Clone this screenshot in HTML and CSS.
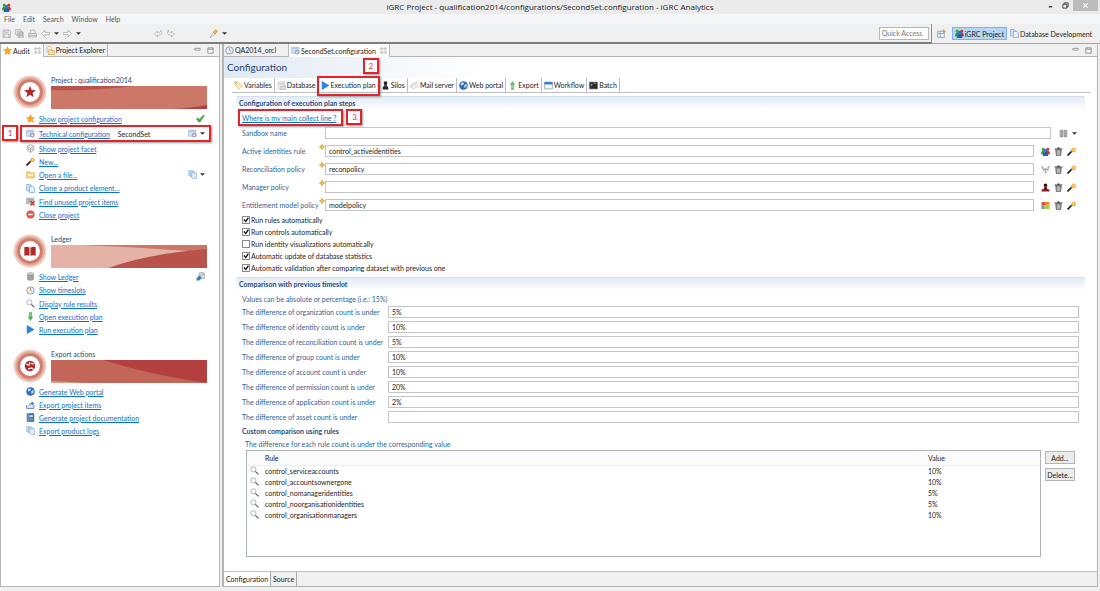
FILE: index.html
```html
<!DOCTYPE html>
<html lang="en">
<head>
<meta charset="utf-8">
<title>iGRC Project - iGRC Analytics</title>
<link rel="stylesheet" href="styles.css">
</head>
<body>
<svg class="sprite" width="0" height="0" aria-hidden="true">
  <symbol id="people" viewBox="0 0 16 16"><circle cx="4" cy="4" r="2.6" fill="#35a435"/><circle cx="12" cy="4" r="2.6" fill="#d83030"/><path d="M0 13c0-5 2-7 4-7s4 2 4 7z" fill="#239a32"/><path d="M8 13c0-5 2-7 4-7s4 2 4 7z" fill="#c92b2b"/><circle cx="8" cy="6" r="2.8" fill="#2e72c8"/><path d="M3 16c0-5 2-7 5-7s5 2 5 7z" fill="#1e5fc0"/></symbol>
  <symbol id="save" viewBox="0 0 16 16"><path d="M2 2h11l2 2v11H2zM5 2v4h6V2M4 15V9h8v6" fill="#f0f0f0" stroke="#a9a9a9" stroke-width="1.4"/></symbol>
  <symbol id="saveall" viewBox="0 0 16 16"><path d="M1 1h9v9H1zM4 4h9v8H4zM6 6h9v9H6zM8 6v3h5V6M8 15v-4h5v4" fill="#f0f0f0" stroke="#a9a9a9" stroke-width="1.2"/></symbol>
  <symbol id="print" viewBox="0 0 16 16"><path d="M4 8l1-6h7l1 6M1 8h14v6H1zM3 14v-3h10v3" fill="#eee" stroke="#a3a3a3" stroke-width="1.3"/></symbol>
  <symbol id="back" viewBox="0 0 16 16"><path d="M1 8l6-6v4h8v4H7v4z" fill="#f8f8f8" stroke="#a5a5a5" stroke-width="1.3"/></symbol>
  <symbol id="fwd" viewBox="0 0 16 16"><path d="M15 8L9 2v4H1v4h8v4z" fill="#f8f8f8" stroke="#a5a5a5" stroke-width="1.3"/></symbol>
  <symbol id="prev" viewBox="0 0 16 16"><path d="M1 9l5-5v3c4 0 6-2 6-5 3 5 2 9-6 9v3z" fill="#f8f8f8" stroke="#a5a5a5" stroke-width="1.2"/></symbol>
  <symbol id="next" viewBox="0 0 16 16"><path d="M15 9l-5-5v3C6 7 4 5 4 2c-3 5-2 9 6 9v3z" fill="#f8f8f8" stroke="#a5a5a5" stroke-width="1.2"/></symbol>
  <symbol id="torch" viewBox="0 0 16 16"><path d="M2 15l6-9 3 2-7 7z" fill="#fff" stroke="#8a8a9a"/><path d="M7 6l5-5 3 3-4 5z" fill="#f3b54a" stroke="#c88a2a"/></symbol>
  <symbol id="star" viewBox="0 0 16 16"><path d="M8 1l2.2 4.7 5.3.6-4 3.5 1.2 5.2L8 12.4 3.3 15l1.2-5.2-4-3.5 5.3-.6z" fill="#f7a823" stroke="#e08a10" stroke-width=".7"/></symbol>
  <symbol id="x" viewBox="0 0 16 16"><path d="M2 2h3l3 3 3-3h3v3l-3 3 3 3v3h-3l-3-3-3 3H2v-3l3-3-3-3z" fill="#fff" stroke="#777" stroke-width="1.4"/></symbol>
  <symbol id="folders" viewBox="0 0 16 16"><path d="M2 1h6l2 3v6H2z" fill="#fff" stroke="#c9963a"/><path d="M4 6h4l1 2h6v7H4z" fill="#f9dda0" stroke="#c9963a"/></symbol>
  <symbol id="min" viewBox="0 0 16 16"><path d="M2 3h12v4H2z" fill="#fff" stroke="#777" stroke-width="1.6"/></symbol>
  <symbol id="max" viewBox="0 0 16 16"><path d="M2 2h12v12H2zM2 5h12" fill="#fff" stroke="#777" stroke-width="1.8"/></symbol>
  <symbol id="config" viewBox="0 0 16 16"><path d="M1 2h13v11H1z" fill="#cfe2f6" stroke="#93b2d4"/><path d="M2 4h11" stroke="#a6c3e4" stroke-width="2"/><circle cx="11" cy="11" r="3.2" fill="#c3c9d2" stroke="#9aa3b0" stroke-width="2"/><circle cx="11" cy="11" r="1.2" fill="#fff"/></symbol>
  <symbol id="cube" viewBox="0 0 16 16"><path d="M8 1l6 3v7l-6 4-6-4V4zM2 4l6 3 6-3M8 7v8" fill="#e5e7e8" stroke="#8f9598"/><circle cx="5" cy="9" r="1.2" fill="#999"/><circle cx="11" cy="9" r="1.2" fill="#999"/></symbol>
  <symbol id="wand" viewBox="0 0 16 16"><path d="M1 15l8-8" stroke="#222" stroke-width="3"/><path d="M9 2l2 1 2-2 1 3 2 1-2 2v2l-3-1-3 1V6z" fill="#f6b73c" stroke="#d58b1d" stroke-width=".7"/><circle cx="11.5" cy="5" r="1.4" fill="#fff3c8"/></symbol>
  <symbol id="folder" viewBox="0 0 16 16"><path d="M1 3h5l1 2h8v9H1z" fill="#fbd27a" stroke="#e3a33b"/><path d="M3 7h10v4H3z" fill="#fff0c4"/></symbol>
  <symbol id="pages" viewBox="0 0 16 16"><path d="M1 1h7l2 2v9H1z" fill="#d6e7f8" stroke="#5a92cc"/><path d="M6 4h6l3 3v8H6z" fill="#eaf4ff" stroke="#4b86c4"/></symbol>
  <symbol id="copies" viewBox="0 0 16 16"><path d="M1 1h8v9H1zM4 3h8v9H4z" fill="#cfe2f5" stroke="#8eb4dc"/><path d="M6 5h9v10H8l-2-2z" fill="#deecfb" stroke="#7ba6d3"/></symbol>
  <symbol id="unused" viewBox="0 0 16 16"><path d="M1 2h13v10H1z" fill="#c8ccd0" stroke="#8d9297"/><path d="M3 5h9M3 8h6" stroke="#777"/><path d="M8 7l7 8m0-8l-7 8" stroke="#df2a1c" stroke-width="2.4"/></symbol>
  <symbol id="stop" viewBox="0 0 16 16"><circle cx="8" cy="8" r="6.8" fill="#e4554c" stroke="#d0463e"/><path d="M4 8h8" stroke="#fff" stroke-width="2.6"/></symbol>
  <symbol id="check" viewBox="0 0 16 16"><path d="M1 9l3-2 2 3 7-8 2 1-8 11H5z" fill="#3fb43f" stroke="#26882c"/></symbol>
  <symbol id="db" viewBox="0 0 16 16"><path d="M2 3c0-3 12-3 12 0v10c0 3-12 3-12 0z" fill="#8e9194"/><ellipse cx="8" cy="3.5" rx="6" ry="2" fill="#c4c6c8"/><path d="M2 7c2 2 10 2 12 0M2 11c2 2 10 2 12 0" stroke="#d3d5d6" fill="none"/></symbol>
  <symbol id="dblight" viewBox="0 0 16 16"><path d="M2 3c0-3 12-3 12 0v10c0 3-12 3-12 0z" fill="#ededed" stroke="#b9b9b9"/><path d="M2 4c2 2 10 2 12 0M7 9h8v6H7z" stroke="#aaa" fill="#e0e0e0"/></symbol>
  <symbol id="dbup" viewBox="0 0 16 16"><path d="M5 2c0-2 10-2 10 0v10H5z" fill="#d6dade" stroke="#8e979f"/><path d="M1 15v-4l5-5 4 4-4 5z" fill="#3f78b8"/><path d="M8 6l6-3" stroke="#7b8790"/></symbol>
  <symbol id="clock" viewBox="0 0 16 16"><circle cx="8" cy="8" r="6.3" fill="#eaf3ff" stroke="#9aa6b8" stroke-width="2"/><path d="M8 4v4l3 1" fill="none" stroke="#c98a35" stroke-width="1.6"/></symbol>
  <symbol id="search" viewBox="0 0 16 16"><circle cx="6" cy="6" r="4.6" fill="#f7fbfd" stroke="#929da4" stroke-width="1.2"/><path d="M9.5 9.5L15 15" stroke="#555" stroke-width="1.9"/></symbol>
  <symbol id="plan" viewBox="0 0 16 16"><path d="M6 1h4v8h2l-4 6-4-6h2z" fill="#53b558" stroke="#3a9142" stroke-width=".8"/><path d="M6 3h4M6 6h4" stroke="#b7e2b8"/></symbol>
  <symbol id="play" viewBox="0 0 16 16"><path d="M2 1l12 7-12 7z" fill="#2b86e2" stroke="#1b6fc8"/></symbol>
  <symbol id="globe" viewBox="0 0 16 16"><circle cx="8" cy="8" r="7" fill="#2e6fc0" stroke="#2a5b9d"/><path d="M3 4l4-2 2 2-2 3-3 1zM9 8l4-3 1 4-4 4z" fill="#c4def3"/></symbol>
  <symbol id="export" viewBox="0 0 16 16"><path d="M1 9v6h13V9" fill="#dbe8f6" stroke="#557eaf" stroke-width="1.5"/><path d="M4 11c1-5 4-6 6-6V2l5 4-5 4V7c-3 0-4 2-6 4z" fill="#4d7ec0"/></symbol>
  <symbol id="book" viewBox="0 0 16 16"><path d="M2 1h12v14H2z" fill="#3c73b0" stroke="#2c5a8f"/><path d="M4 1v14" stroke="#a8c6e4"/><path d="M6 4h6v3H6z" fill="#d9e8f6"/><path d="M6 10h6M6 12h6" stroke="#9fc0df"/></symbol>
  <symbol id="tag" viewBox="0 0 16 16"><path d="M1 1h5l9 8-6 6-8-9z" fill="#f8e6bd" stroke="#d4b271"/><circle cx="4" cy="4" r="1.2" fill="#fff" stroke="#b99c5f"/></symbol>
  <symbol id="silo" viewBox="0 0 16 16"><path d="M5 1h6v4l-1 2 3 5v3H3v-3l3-5-1-2z" fill="#262626"/><path d="M6 9h4" stroke="#aaa"/></symbol>
  <symbol id="mail" viewBox="0 0 16 16"><path d="M2 6l9-4 4 7-9 5-5-3z" fill="#f4f4f4" stroke="#b9bcc0"/><path d="M2 6l7 2 2-6M1 11l5-3" fill="none" stroke="#c5c8cc"/></symbol>
  <symbol id="up" viewBox="0 0 16 16"><path d="M8 1l4 5h-2v9H6V6H4z" fill="#6fc072" stroke="#4ba552" stroke-width=".9"/><path d="M6 9h4M6 12h4" stroke="#cbeccb"/></symbol>
  <symbol id="window" viewBox="0 0 16 16"><path d="M1 2h14v12H1z" fill="#f5f8fb" stroke="#6f7d8b"/><path d="M1 2h14v4H1z" fill="#2f78c8"/></symbol>
  <symbol id="batch" viewBox="0 0 16 16"><path d="M1 2h14v12H1z" fill="#2b2b2b" stroke="#555"/><path d="M3 5l3 2-3 2M8 4h5" fill="none" stroke="#ddd"/></symbol>
  <symbol id="persp" viewBox="0 0 16 16"><path d="M1 4h12v11H1zM1 8h12M6 4v11" fill="#eaf2fb" stroke="#8596ab" stroke-width="1.3"/><path d="M12 1v7M9 4h7" stroke="#e0a030" stroke-width="2"/></symbol>
  <symbol id="columns" viewBox="0 0 16 16"><path d="M2 2h5v12H2zM9 2h5v12H9z" fill="#a5a5a5" stroke="#8a8a8a"/></symbol>
  <symbol id="trash" viewBox="0 0 16 16"><path d="M3 5h10l-1 10H4z" fill="#8c8c8c" stroke="#444"/><path d="M1 3.5h14M6 2h4" stroke="#444" stroke-width="2"/><path d="M6 6v8M8 6v8M10 6v8" stroke="#ddd"/></symbol>
  <symbol id="recon" viewBox="0 0 16 16"><path d="M2 3l4 4h4l4-4M8 7v6M3 12l4-5M13 12L9 7M2 3l1 5h10l1-5" fill="none" stroke="#999" stroke-width="1.4"/><circle cx="2" cy="3" r="1.8" fill="#bbb"/><circle cx="14" cy="3" r="1.8" fill="#bbb"/><circle cx="8" cy="13" r="2" fill="#aaa"/></symbol>
  <symbol id="manager" viewBox="0 0 16 16"><circle cx="8" cy="4" r="3" fill="#2b1111"/><path d="M6 6h4l1 4 4 2v3H1v-3l4-2z" fill="#8b1f1f"/><path d="M7 7h2v5H7z" fill="#1c1c1c"/></symbol>
  <symbol id="model" viewBox="0 0 16 16"><path d="M1 2h14v12H1z" fill="#ffd23a"/><path d="M1 2h7v6H1z" fill="#e44a38"/><path d="M8 2h7v4H8z" fill="#f47b30"/><path d="M1 9h5v5H1z" fill="#4f9ce0"/><path d="M8 8h7v6H8z" fill="#8bd53a"/></symbol>
  <symbol id="hint" viewBox="0 0 16 16"><path d="M8 2l2 4 4 2-4 2-2 4-2-4-4-2 4-2z" fill="#fff" stroke="#e0a52a" stroke-width="3"/></symbol>
  <symbol id="caret" viewBox="0 0 8 8"><path d="M0 2h8L4 6z" fill="#333"/></symbol>
  <symbol id="ring" viewBox="0 0 36 36"><circle cx="18" cy="18" r="17.5" fill="#f0cfc4"/><circle cx="18" cy="18" r="15.5" fill="#e3a898"/><circle cx="18" cy="18" r="13.5" fill="#cf7c6c"/><circle cx="18" cy="18" r="10.5" fill="#fff"/></symbol>
</svg>

<header class="titlebar">
  <svg class="icon"><use href="#people"/></svg>
  <h1>iGRC Project - qualification2014/configurations/SecondSet.configuration - iGRC Analytics</h1>
  <div class="winbuttons">
    <button type="button" aria-label="Minimize"><svg viewBox="0 0 16 16"><path d="M4 11h8" stroke="#333" stroke-width="3"/></svg></button>
    <button type="button" aria-label="Restore"><svg viewBox="0 0 16 16"><path d="M5 5V2h9v9h-3M2 5h9v9H2z" fill="none" stroke="#333" stroke-width="2"/></svg></button>
    <button type="button" class="close" aria-label="Close"><svg viewBox="0 0 16 16"><path d="M3 3l10 10M13 3L3 13" stroke="#fff" stroke-width="2.5"/></svg></button>
  </div>
</header>
<nav class="menubar">
  <button type="button">File</button><button type="button">Edit</button><button type="button">Search</button><button type="button">Window</button><button type="button">Help</button>
</nav>
<div class="toolbar">
  <div class="tools">
    <button type="button" aria-label="Save"><svg class="icon"><use href="#save"/></svg></button>
    <button type="button" aria-label="Save all"><svg class="icon"><use href="#saveall"/></svg></button>
    <button type="button" aria-label="Print"><svg class="icon"><use href="#print"/></svg></button>
    <button type="button" aria-label="Back"><svg class="icon"><use href="#back"/></svg><svg class="caret"><use href="#caret"/></svg></button>
    <button type="button" aria-label="Forward"><svg class="icon"><use href="#fwd"/></svg><svg class="caret"><use href="#caret"/></svg></button>
    <div class="edits">
      <button type="button" aria-label="Previous edit"><svg class="icon"><use href="#prev"/></svg></button>
      <button type="button" aria-label="Next edit"><svg class="icon"><use href="#next"/></svg></button>
    </div>
    <button type="button" aria-label="Search"><svg class="icon"><use href="#torch"/></svg><svg class="caret"><use href="#caret"/></svg></button>
    <input class="quick" type="text" placeholder="Quick Access" aria-label="Quick Access">
  </div>
  <div class="perspectives">
    <button type="button" aria-label="Open perspective"><svg class="icon"><use href="#persp"/></svg></button>
    <button type="button" class="persp on"><svg class="icon"><use href="#people"/></svg>iGRC Project</button>
    <button type="button" class="persp"><svg class="icon"><use href="#pages"/></svg>Database Development</button>
  </div>
</div>

<div class="workbench">
  <aside class="pane audit">
    <div class="tabs">
      <button type="button" class="tab on"><svg class="icon"><use href="#star"/></svg>Audit<svg class="mini"><use href="#x"/></svg></button>
      <button type="button" class="tab"><svg class="icon"><use href="#folders"/></svg>Project Explorer</button>
      <span class="panebuttons"><svg class="mini"><use href="#min"/></svg><svg class="mini"><use href="#max"/></svg></span>
    </div>
    <div class="groups">
      <section class="group">
        <header class="grouphead">
          <svg class="ring" viewBox="0 0 36 36"><use href="#ring"/><path d="M18 11.5l1.700 4.300 4.600.3-3.600 2.900 1.200 4.500-3.900-2.500-3.900 2.500 1.200-4.500-3.600-2.900 4.600-.3z" fill="#b02a2a"/></svg>
          <div class="grouptitle"><h2>Project : qualification2014</h2>
            <svg class="banner" viewBox="0 0 155 23" preserveAspectRatio="none"><path d="M0 0h155v23H0z" fill="#cb7868"/><path d="M0 0h82Q45 5 0 4z" fill="#b9524a"/><path d="M120 23q20-1 35-4v4z" fill="#b33f3f"/></svg></div>
        </header>
        <ul class="actions">
          <li><svg class="icon"><use href="#star"/></svg><a href="#">Show project configuration</a><svg class="icon lone"><use href="#check"/></svg></li>
          <li class="tall"><svg class="icon"><use href="#config"/></svg><a href="#">Technical configuration</a><span class="current">SecondSet</span><button type="button" class="more" aria-label="Choose configuration"><svg class="icon"><use href="#config"/></svg><svg class="caret"><use href="#caret"/></svg></button>
            <span class="mark rowmark"></span><span class="mark badge one">1</span></li>
          <li><svg class="icon"><use href="#cube"/></svg><a href="#">Show project facet</a></li>
          <li><svg class="icon"><use href="#wand"/></svg><a href="#">New...</a></li>
          <li><svg class="icon"><use href="#folder"/></svg><a href="#">Open a file...</a><button type="button" class="more" aria-label="Recent files"><svg class="icon"><use href="#copies"/></svg><svg class="caret"><use href="#caret"/></svg></button></li>
          <li class="mid"><svg class="icon"><use href="#pages"/></svg><a href="#">Clone a product element...</a></li>
          <li><svg class="icon"><use href="#unused"/></svg><a href="#">Find unused project items</a></li>
          <li><svg class="icon"><use href="#stop"/></svg><a href="#">Close project</a></li>
        </ul>
      </section>
      <section class="group compact">
        <header class="grouphead">
          <svg class="ring" viewBox="0 0 36 36"><use href="#ring"/><path d="M12 14q3-1 5.500.5V23q-2.500-1-5.500 0zM24 14q-3-1-5.500.5V23q2.500-1 5.500 0z" fill="#b02a2a"/></svg>
          <div class="grouptitle"><h2>Ledger</h2>
            <svg class="banner" viewBox="0 0 155 23" preserveAspectRatio="none"><path d="M0 0h155v23H0z" fill="#e5b3a5"/><path d="M30 0h125v5l-17 1Q80 2 30 0z" fill="#cb7868"/><path d="M57 23Q95 9 155 4v19z" fill="#b9524a"/></svg></div>
        </header>
        <ul class="actions">
          <li><svg class="icon"><use href="#db"/></svg><a href="#">Show Ledger</a><svg class="icon lone"><use href="#dbup"/></svg></li>
          <li class="mid"><svg class="icon"><use href="#clock"/></svg><a href="#">Show timeslots</a></li>
          <li><svg class="icon"><use href="#search"/></svg><a href="#">Display rule results</a></li>
          <li><svg class="icon"><use href="#plan"/></svg><a href="#">Open execution plan</a></li>
          <li><svg class="icon"><use href="#play"/></svg><a href="#">Run execution plan</a></li>
        </ul>
      </section>
      <section class="group compact">
        <header class="grouphead">
          <svg class="ring" viewBox="0 0 36 36"><use href="#ring"/><circle cx="18" cy="18" r="5.5" fill="#b02a2a"/><path d="M14 16l3 1 1-3m-2 7l4-1 2 2m-3-7l3 1" fill="none" stroke="#fff" stroke-width="1.2"/></svg>
          <div class="grouptitle"><h2>Export actions</h2>
            <svg class="banner" viewBox="0 0 155 23" preserveAspectRatio="none"><path d="M0 0h155v23H0z" fill="#c3665a"/><path d="M52 0h103v23Q95 14 52 0z" fill="#b33f3f"/><path d="M0 21l35 2H0z" fill="#dd9d8d"/></svg></div>
        </header>
        <ul class="actions">
          <li><svg class="icon"><use href="#globe"/></svg><a href="#">Generate Web portal</a></li>
          <li><svg class="icon"><use href="#export"/></svg><a href="#">Export project items</a></li>
          <li><svg class="icon"><use href="#book"/></svg><a href="#">Generate project documentation</a></li>
          <li><svg class="icon"><use href="#copies"/></svg><a href="#">Export product logs</a></li>
        </ul>
      </section>
    </div>
  </aside>

  <main class="pane editor">
    <div class="tabs">
      <button type="button" class="tab file"><svg class="icon"><use href="#clock"/></svg>QA2014_orcl</button>
      <button type="button" class="tab on"><svg class="icon"><use href="#config"/></svg>SecondSet.configuration<svg class="mini"><use href="#x"/></svg></button>
      <span class="panebuttons"><svg class="mini"><use href="#min"/></svg><svg class="mini"><use href="#max"/></svg></span>
    </div>
    <div class="page">
      <div class="pagehead"><h2>Configuration</h2></div>
      <nav class="pagetabs">
        <button type="button"><svg class="icon"><use href="#tag"/></svg>Variables</button>
        <button type="button"><svg class="icon"><use href="#dblight"/></svg>Database</button>
        <button type="button" class="on"><svg class="icon"><use href="#play"/></svg>Execution plan<span class="mark tabmark"></span><span class="mark badge two">2</span></button>
        <button type="button"><svg class="icon"><use href="#silo"/></svg>Silos</button>
        <button type="button"><svg class="icon"><use href="#mail"/></svg>Mail server</button>
        <button type="button"><svg class="icon"><use href="#globe"/></svg>Web portal</button>
        <button type="button"><svg class="icon"><use href="#up"/></svg>Export</button>
        <button type="button"><svg class="icon"><use href="#window"/></svg>Workflow</button>
        <button type="button"><svg class="icon"><use href="#batch"/></svg>Batch</button>
      </nav>
      <section class="block">
        <h3>Configuration of execution plan steps</h3>
        <div class="body">
          <p class="help"><a href="#">Where is my main collect line ?</a><span class="mark linkmark"></span><span class="mark badge three">3</span></p>
          <div class="field wide"><label for="f0">Sandbox name</label><input id="f0" type="text"><span class="fieldtools"><svg class="icon"><use href="#columns"/></svg><svg class="caret"><use href="#caret"/></svg></span></div>
          <div class="field"><label for="f1">Active identities rule</label><svg class="hint"><use href="#hint"/></svg><input id="f1" type="text" value="control_activeidentities"><span class="fieldtools"><svg class="icon"><use href="#people"/></svg><svg class="icon"><use href="#trash"/></svg><svg class="icon"><use href="#wand"/></svg></span></div>
          <div class="field"><label for="f2">Reconciliation policy</label><svg class="hint"><use href="#hint"/></svg><input id="f2" type="text" value="reconpolicy"><span class="fieldtools"><svg class="icon"><use href="#recon"/></svg><svg class="icon"><use href="#trash"/></svg><svg class="icon"><use href="#wand"/></svg></span></div>
          <div class="field"><label for="f3">Manager policy</label><svg class="hint"><use href="#hint"/></svg><input id="f3" type="text"><span class="fieldtools"><svg class="icon"><use href="#manager"/></svg><svg class="icon"><use href="#trash"/></svg><svg class="icon"><use href="#wand"/></svg></span></div>
          <div class="field"><label for="f4">Entitlement model policy</label><svg class="hint"><use href="#hint"/></svg><input id="f4" type="text" value="modelpolicy"><span class="fieldtools"><svg class="icon"><use href="#model"/></svg><svg class="icon"><use href="#trash"/></svg><svg class="icon"><use href="#wand"/></svg></span></div>
          <label class="tick"><input type="checkbox" checked>Run rules automatically</label>
          <label class="tick"><input type="checkbox" checked>Run controls automatically</label>
          <label class="tick"><input type="checkbox">Run identity visualizations automatically</label>
          <label class="tick"><input type="checkbox" checked>Automatic update of database statistics</label>
          <label class="tick"><input type="checkbox" checked>Automatic validation after comparing dataset with previous one</label>
        </div>
      </section>
      <section class="block">
        <h3>Comparison with previous timeslot</h3>
        <div class="body">
          <p class="note">Values can be absolute or percentage (i.e.: 15%)</p>
          <div class="limit"><label for="d1">The difference of organization count is under</label><input id="d1" type="text" value="5%"></div>
          <div class="limit"><label for="d2">The difference of identity count is under</label><input id="d2" type="text" value="10%"></div>
          <div class="limit"><label for="d3">The difference of reconciliation count is under</label><input id="d3" type="text" value="5%"></div>
          <div class="limit"><label for="d4">The difference of group count is under</label><input id="d4" type="text" value="10%"></div>
          <div class="limit"><label for="d5">The difference of account count is under</label><input id="d5" type="text" value="10%"></div>
          <div class="limit"><label for="d6">The difference of permission count is under</label><input id="d6" type="text" value="20%"></div>
          <div class="limit"><label for="d7">The difference of application count is under</label><input id="d7" type="text" value="2%"></div>
          <div class="limit"><label for="d8">The difference of asset count is under</label><input id="d8" type="text"></div>
          <h4>Custom comparison using rules</h4>
          <p class="note sub">The difference for each rule count is under the corresponding value</p>
          <div class="rules">
            <div class="tablebox">
              <table>
                <thead><tr><th class="c-icon"></th><th>Rule</th><th class="c-value">Value</th></tr></thead>
                <tbody>
                  <tr><td><svg class="icon"><use href="#search"/></svg></td><td>control_serviceaccounts</td><td>10%</td></tr>
                  <tr><td><svg class="icon"><use href="#search"/></svg></td><td>control_accountsownergone</td><td>10%</td></tr>
                  <tr><td><svg class="icon"><use href="#search"/></svg></td><td>control_nomanageridentities</td><td>5%</td></tr>
                  <tr><td><svg class="icon"><use href="#search"/></svg></td><td>control_noorganisationidentities</td><td>5%</td></tr>
                  <tr><td><svg class="icon"><use href="#search"/></svg></td><td>control_organisationmanagers</td><td>10%</td></tr>
                </tbody>
              </table>
            </div>
            <div class="rulebuttons"><button type="button">Add...</button><button type="button">Delete...</button></div>
          </div>
        </div>
      </section>
    </div>
    <div class="bottomtabs"><button type="button" class="on">Configuration</button><button type="button">Source</button></div>
  </main>
</div>
</body>
</html>
```

FILE: styles.css
```css
* { box-sizing: border-box; margin: 0; padding: 0; }
body {
  display: flex; flex-direction: column; min-height: 100vh;
  background: #f0f0f0; color: #222;
  font: 7px/10px Lato, "Open Sans", sans-serif;
}
button, input { font: inherit; color: inherit; }
button { display: flex; align-items: center; gap: 2px; border: 0; background: none; white-space: nowrap; }
ul { list-style: none; }
.sprite { display: none; }
.icon { width: 9px; height: 9px; flex: none; display: block; }
.mini { width: 7px; height: 7px; flex: none; display: block; }
.caret { width: 5px; height: 5px; flex: none; display: block; }

.titlebar { display: flex; align-items: center; height: 14px; padding-left: 2px; background: #ebebeb; }
.titlebar h1 { flex: 1; padding-left: 46px; text-align: center; font: 400 8px/12px "Open Sans", sans-serif; }
.winbuttons { display: flex; align-self: flex-start; padding-right: 2px; }
.winbuttons button { width: 15px; height: 11px; justify-content: center; }
.winbuttons svg { width: 7px; height: 7px; }
.winbuttons .close { width: 25px; background: #bcbcbc; }

.menubar { display: flex; gap: 8px; height: 10px; padding-left: 4px; background: #f5f6f7; color: #555; }

.toolbar { display: flex; height: 20px; }
.tools { flex: 1; display: flex; align-items: center; gap: 4px; padding: 0 2px; border-bottom: 2px solid #7d7d7d; border-right: 1px solid #8a8a8a; }
.tools button { gap: 4px; }
.edits { display: flex; gap: 3px; padding: 0 30px 0 69px; }
.quick { width: 50px; height: 13px; margin-left: auto; padding: 0 2px; border: 1px solid #b4b8bd; background: #fff; }
.quick::placeholder { color: #777; opacity: 1; }
.perspectives { display: flex; align-items: center; gap: 2px; padding: 0 7px 0 5px; border-bottom: 1px solid #a5a5a5; }
.persp { height: 13px; padding: 0 1px; gap: 1px; }
.persp.on { margin-left: 4px; padding: 0 2px; background: #b5d7f5; border: 1px solid #80b4e6; }

.workbench { flex: 1; display: flex; gap: 2px; padding: 0 2px 4px 0; }
.pane { display: flex; flex-direction: column; border: 1px solid #b4b4b4; border-top: 0; background: #fff; }
.audit { width: 220px; flex: none; }
.editor { flex: 1; min-width: 0; border-left-width: 2px; }
.tabs { display: flex; height: 13px; background: #f0f0f0; border-bottom: 1px solid #b4b4b4; }
.tab { padding: 0 2px; gap: 1px; border-right: 1px solid #b9b9b9; }
.tab.on { height: 13px; background: #fff; }
.tab .mini { margin-left: 3px; }
.tab.file { padding: 0 12px 0 1px; }
.panebuttons { display: flex; gap: 6px; align-items: center; margin-left: auto; padding-right: 5px; }

.groups { display: flex; flex-direction: column; gap: 13px; padding-top: 18px; }
.grouphead { display: flex; gap: 4px; padding: 0 12px; margin-bottom: 3px; }
.compact .grouphead { margin-bottom: 2px; }
.ring { width: 34px; height: 34px; flex: none; }
.grouptitle { flex: 1; }
.grouptitle h2 { font-size: 7px; font-weight: 400; line-height: 11px; color: #254a7c; }
.banner { display: block; width: 100%; height: 23px; }
.actions li { position: relative; display: flex; align-items: center; height: 13px; padding: 0 14px 0 25px; gap: 4px; }
.actions li.mid { height: 14px; }
.actions li.tall { height: 17px; }
a { color: #0b6fd0; text-decoration: underline; }
.current { padding-left: 4px; }
.more { margin-left: auto; gap: 3px; }
.lone { margin-left: auto; }

.mark { position: absolute; border: 2px solid #e3232a; box-shadow: 1px 1px 2px #999; }
.badge { width: 16px; height: 16px; color: #d8383c; text-align: center; line-height: 12px; font-size: 8px; background: #fff; }
.rowmark { left: 19px; right: 8px; top: 0; bottom: 0; }
.badge.one { left: 1px; top: 0; }
.tabmark { left: -2px; right: -2px; top: -2px; bottom: -4px; }
.badge.two { right: -1px; top: -20px; }
.linkmark { left: -4px; right: -7px; top: -4px; bottom: -3px; }
.badge.three { right: -26px; top: -4px; }

.page { flex: 1; }
.pagehead { height: 21px; padding: 4px 4px 0 3px; background: linear-gradient(to right, #e1e9f5, #fff 260px); }
.pagehead h2 { font-size: 10px; line-height: 13px; font-weight: 400; color: #1d3f73; }
.pagetabs { display: flex; height: 15px; margin: 0 7px 0 8px; border-bottom: 1px solid #bdbdbd; }
.pagetabs button { position: relative; padding: 0 2px; gap: 1px; border-right: 1px solid #bdbdbd; }
.block { margin: 3px 12px 0; }
.block h3 { height: 14px; padding: 0 3px; border-top: 1px solid #d3dfee; border-radius: 2px; background: linear-gradient(#e3ebf5, #fff); font-size: 7px; line-height: 12px; color: #1f4b80; }
.body { padding: 0 6px; color: #2f5f95; }
.help { position: relative; width: max-content; margin: 3px 0 1px; }
.field { position: relative; display: flex; align-items: center; height: 18px; }
.field label { width: 83px; flex: none; white-space: nowrap; }
.body input[type="text"] { flex: 1; min-width: 0; height: 12px; padding: 0 3px; border: 1px solid #c3c5cb; background: #fff; color: #222; }
.fieldtools { display: flex; align-items: center; justify-content: flex-end; gap: 4px; width: 45px; padding-right: 3px; }
.wide .fieldtools { width: 28px; padding-right: 2px; }
.hint { position: absolute; left: 77px; top: 2px; width: 6px; height: 6px; }
.tick { display: flex; align-items: center; gap: 1px; height: 12px; color: #222; }
.tick input { appearance: none; width: 8px; height: 8px; border: 1px solid #8a8a8a; background: #fff; }
.tick input:checked::before { content: ""; display: block; width: 6px; height: 6px; background: #111; clip-path: polygon(5% 45%, 25% 35%, 42% 58%, 82% 5%, 98% 20%, 46% 92%); }
.note { padding-top: 3px; }
.limit { display: flex; align-items: center; height: 15px; }
.limit label { width: 146px; flex: none; white-space: nowrap; }
.body h4 { font-size: 7px; line-height: 10px; padding-top: 2px; color: #1f4b80; }
.note.sub { padding-left: 3px; }
.rules { display: flex; gap: 4px; padding: 1px 4px 0; }
.tablebox { flex: 1; height: 107px; border: 1px solid #aeb2ba; }
table { width: 100%; border-collapse: collapse; color: #222; table-layout: fixed; }
th { height: 14px; text-align: left; font-weight: 400; background: #fcfcfc; border-bottom: 1px solid #eef1f4; }
td { height: 11px; line-height: 10px; }
.c-icon { width: 18px; }
.c-value { width: 112px; }
td .icon { margin-left: 3px; }
.rulebuttons { display: flex; flex-direction: column; gap: 4px; padding-top: 1px; }
.rulebuttons button { width: 30px; height: 13px; justify-content: center; border: 1px solid #b4b4b4; background: #ececec; color: #222; }
.bottomtabs { display: flex; height: 15px; background: #f0f0f0; border-top: 1px solid #c0c0c0; }
.bottomtabs button { padding: 0 2px; border-right: 1px solid #a9a9a9; }
.bottomtabs .on { background: #fff; }
```
